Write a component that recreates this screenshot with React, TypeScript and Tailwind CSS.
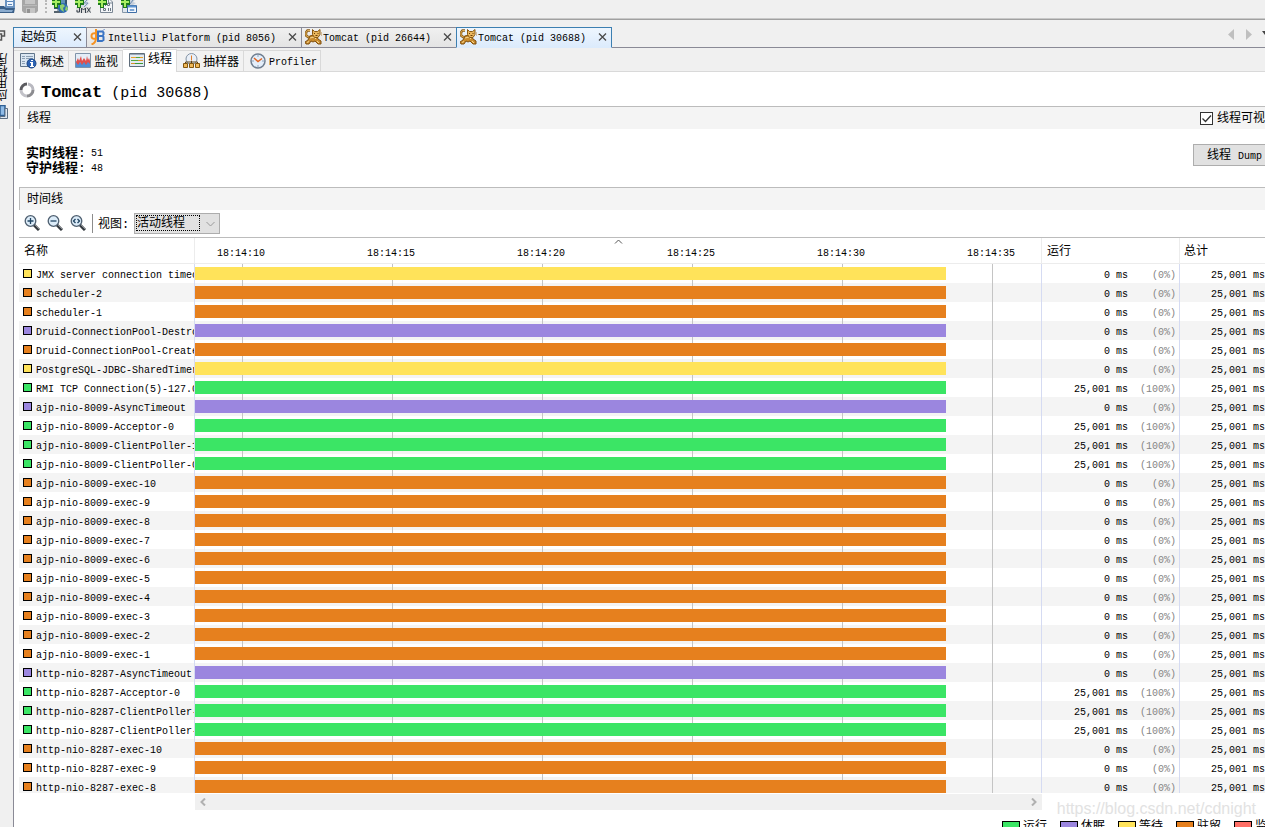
import { useState } from 'react'
import type { ReactNode } from 'react'

type State = 'running' | 'sleeping' | 'wait' | 'park' | 'monitor'

const STATE_BG: Record<State, string> = {
  running: 'bg-[#3be565]',
  sleeping: 'bg-[#9b86df]',
  wait: 'bg-[#ffe35a]',
  park: 'bg-[#e6801e]',
  monitor: 'bg-[#ff6f66]',
}

const THREADS: { name: string; state: State }[] = [
  { name: 'JMX server connection timeout', state: 'wait' },
  { name: 'scheduler-2', state: 'park' },
  { name: 'scheduler-1', state: 'park' },
  { name: 'Druid-ConnectionPool-Destroy', state: 'sleeping' },
  { name: 'Druid-ConnectionPool-Create', state: 'park' },
  { name: 'PostgreSQL-JDBC-SharedTimer', state: 'wait' },
  { name: 'RMI TCP Connection(5)-127.0.0.1', state: 'running' },
  { name: 'ajp-nio-8009-AsyncTimeout', state: 'sleeping' },
  { name: 'ajp-nio-8009-Acceptor-0', state: 'running' },
  { name: 'ajp-nio-8009-ClientPoller-1', state: 'running' },
  { name: 'ajp-nio-8009-ClientPoller-0', state: 'running' },
  { name: 'ajp-nio-8009-exec-10', state: 'park' },
  { name: 'ajp-nio-8009-exec-9', state: 'park' },
  { name: 'ajp-nio-8009-exec-8', state: 'park' },
  { name: 'ajp-nio-8009-exec-7', state: 'park' },
  { name: 'ajp-nio-8009-exec-6', state: 'park' },
  { name: 'ajp-nio-8009-exec-5', state: 'park' },
  { name: 'ajp-nio-8009-exec-4', state: 'park' },
  { name: 'ajp-nio-8009-exec-3', state: 'park' },
  { name: 'ajp-nio-8009-exec-2', state: 'park' },
  { name: 'ajp-nio-8009-exec-1', state: 'park' },
  { name: 'http-nio-8287-AsyncTimeout', state: 'sleeping' },
  { name: 'http-nio-8287-Acceptor-0', state: 'running' },
  { name: 'http-nio-8287-ClientPoller-1', state: 'running' },
  { name: 'http-nio-8287-ClientPoller-0', state: 'running' },
  { name: 'http-nio-8287-exec-10', state: 'park' },
  { name: 'http-nio-8287-exec-9', state: 'park' },
  { name: 'http-nio-8287-exec-8', state: 'park' },
]

const TICKS = ['18:14:10', '18:14:15', '18:14:20', '18:14:25', '18:14:30', '18:14:35']

const LEGEND: { label: string; state: State }[] = [
  { label: '运行', state: 'running' },
  { label: '休眠', state: 'sleeping' },
  { label: '等待', state: 'wait' },
  { label: '驻留', state: 'park' },
  { label: '监视', state: 'monitor' },
]

/* ---------- icons ---------- */

function Plus() {
  return (
    <g>
      <path d="M2 -3h4v3h3v5h-3v3h-4v-3h-3v-5h3z" fill="#1c7a1c" />
      <path d="M3 -2h2v3h3v2h-3v4h-2v-4h-3v-2h3z" fill="#a8ee62" />
    </g>
  )
}

function OpenIcon() {
  return (
    <svg width="15" height="14" viewBox="0 0 15 14">
      <path d="M5 0h10v8H5z" fill="#6b93c0" />
      <path d="M7 0h6v6H7z" fill="#eef5fd" />
      <path d="M7 1.500h6M8 4.500h4" stroke="#5a86ba" />
      <path d="M0 6h4l2 2h9l-1 5H0z" fill="#3a5f88" />
      <path d="M0 9h4l2 1h7l-1 2H0z" fill="#8aabce" />
    </svg>
  )
}

function SaveIcon() {
  return (
    <svg width="16" height="14" viewBox="0 0 16 14">
      <path d="M0 0h16v11l-2 2H2l-2-2z" fill="#a6a6a6" />
      <path d="M3 0h10v4H3z" fill="#c6c6c6" />
      <path d="M1 5.500h14" stroke="#b9b9b9" />
      <path d="M4 8h9v5H4z" fill="#c4c4c4" />
      <path d="M5 9h3v4H5z" fill="#929292" />
    </svg>
  )
}

function RemoteIcon() {
  return (
    <svg width="16" height="14" viewBox="0 0 16 14">
      <path d="M2 0h13v9H2z" fill="#33536f" />
      <path d="M4 0h9v7H4z" fill="#5f92ba" />
      <path d="M2 11h8v2H2z" fill="#56646f" />
      <path d="M5 9h4v2H5z" fill="#9aa7b2" />
      <circle cx="11" cy="8" r="5" fill="#2f6cb0" />
      <path d="M8 5l3-1 2 2-2 2 1 4-3-2-1-2zM14 6l2 2-1 3-2-1z" fill="#8fd06e" />
      <Plus />
    </svg>
  )
}

function JmxIcon() {
  return (
    <svg width="16" height="14" viewBox="0 0 16 14">
      <path d="M9 0h5l-2 2 3 1-4 4H6V4z" fill="#d3dbe5" />
      <path d="M12 0L9 3l4 0-4 4" stroke="#7c95b2" fill="none" />
      <path d="M1 7h15v6H1z" fill="#dcdcdc" />
      <path d="M4.500 7v5H2v-2M6.500 13V8l2 2 2-2v5M12 7.500l3.500 5M15.500 7.500l-3.500 5" stroke="#39434d" fill="none" />
      <Plus />
    </svg>
  )
}

function DumpIcon() {
  return (
    <svg width="16" height="14" viewBox="0 0 16 14">
      <path d="M2.500 -1h9l3 3v10.500h-12z" fill="#f3f5f8" stroke="#7b8794" />
      <path d="M10.500 0v3h4" stroke="#7b8794" fill="none" />
      <path d="M9.500 3.500h2v2h-2zM5.500 8.500h2v2h-2z" stroke="#6b7784" fill="none" />
      <path d="M7.500 3v3M10.500 8v3M12.500 8v3" stroke="#6b7784" />
      <Plus />
    </svg>
  )
}

function SnapshotIcon() {
  return (
    <svg width="17" height="14" viewBox="0 0 17 14">
      <path d="M9 0h5l-2 2 3 1-3 2H7z" fill="#c6cfdb" />
      <path d="M12 0L9 4" stroke="#6e8db0" />
      <path d="M1.500 4.500h5v8h-5z" fill="#dfe6ee" stroke="#8697a8" />
      <path d="M6.500 5.500h9v7h-9z" fill="#f5f9ff" stroke="#3f6ea6" />
      <path d="M7 6.500h8" stroke="#5f94d0" strokeWidth="2" />
      <path d="M9 9.500h4v1H9z" stroke="#7ea6d4" fill="none" />
      <Plus />
    </svg>
  )
}

function IntelliJIcon() {
  return (
    <svg width="16" height="16" viewBox="0 0 16 16" fill="none">
      <path d="M8 2.500h4.500l1 1v2l-1 1.500 1 1v3l-1.500 1H8z" stroke="#3a74c4" strokeWidth="2" />
      <path d="M8 7h5" stroke="#3a74c4" strokeWidth="2" />
      <path d="M12 2l3-2" stroke="#7b9bd0" />
      <path d="M6 0v9q0 5-4.500 6.500M6 4.500Q1.500 3.500 1.500 7t4 2.500" stroke="#f59222" strokeWidth="2" />
    </svg>
  )
}

function TomcatIcon() {
  return (
    <svg width="17" height="16" viewBox="0 0 17 16">
      {/* tail */}
      <path d="M5 1.500H2.500L1 3.500v3l2 1.500h3" fill="none" stroke="#8a5a14" strokeWidth="2.500" />
      <path d="M5 1.500H2.500L1 3.500v3l2 1.500h3" fill="none" stroke="#e2b25c" />
      {/* body */}
      <path d="M5 7l4-1 3 2 1 2 3 2v3h-3l-3-3-2 1-2-1-2 3H1l-1-2 3-2z" fill="#c98c2f" stroke="#7f4f0e" />
      <path d="M5 9l4-1 2 2M2 13.500l2-1M12 12l2 2" stroke="#f6d690" fill="none" />
      {/* head */}
      <path d="M7.500 0.500l2 2h3l2.500-2v5L13 8.500H9.500l-2-3z" fill="#eab75c" stroke="#8a5a14" />
      <path d="M9 4.500h1M12.500 4.500h1M10.500 6.500h2" stroke="#6b3f08" />
      <path d="M16 4h1M16 6h1" stroke="#b98a45" />
    </svg>
  )
}

function OverviewIcon() {
  return (
    <svg width="17" height="16" viewBox="0 0 17 16">
      <path d="M0.500 0.500h14v13h-14z" fill="#dbe7f3" stroke="#60758b" />
      <path d="M2 3.500h3M6 3.500h7M2 5.500h3M6 5.500h7M2 8.500h3M2 10.500h3" stroke="#8da0b4" />
      <circle cx="11.500" cy="10.500" r="4.500" fill="#2c62b4" stroke="#194484" />
      <path d="M11 7h2v1h-2zM10 9h3v4h1v1h-4v-1h1v-3h-1z" fill="#fff" />
    </svg>
  )
}

function MonitorIcon() {
  return (
    <svg width="16" height="16" viewBox="0 0 16 16">
      <path d="M0.500 0.500h15v14h-15z" fill="#e4edf7" stroke="#7f93a9" />
      <path d="M1 14V9l3-2 2 3 3-3 2 2 2-2 2 2v5z" fill="#4f8fd6" />
      <path d="M1 9l2-4 1 3 2-5 1 5 2-3 2 3 1-5 1 4 1-2 1 3v3l-2-2-2 3-2-3-2 3-2-3-2 3-2-3-1 2z" fill="#e2504c" />
    </svg>
  )
}

function ThreadsIcon() {
  return (
    <svg width="16" height="14" viewBox="0 0 16 14">
      <path d="M0.500 0.500h15v13h-15z" fill="#e2eaf2" stroke="#5e6c7a" />
      <path d="M1 1.500h14" stroke="#9aa8b6" />
      <path d="M2 4.500h5M11 4.500h3" stroke="#e8a02a" strokeWidth="1" />
      <path d="M7 4.500h4M2 7.500h7" stroke="#54a83d" strokeWidth="1" />
      <path d="M9 7.500h5M2 10.500h4" stroke="#d9902a" strokeWidth="1" />
      <path d="M6 10.500h8" stroke="#3f9a38" strokeWidth="1" />
    </svg>
  )
}

function SamplerIcon() {
  return (
    <svg width="17" height="16" viewBox="0 0 17 16">
      <circle cx="8.500" cy="6" r="5.500" fill="#e9eff7" stroke="#8393a5" />
      <path d="M8.500 2.500v5" stroke="#e07b25" />
      <path d="M8.500 8v3M2.500 11V9h12v2" stroke="#5f4316" fill="none" />
      <path d="M0.500 10.500h4v4h-4zM6.500 10.500h4v4h-4zM12.500 10.500h4v4h-4z" fill="#f0b858" stroke="#82560e" />
    </svg>
  )
}

function ProfilerIcon() {
  return (
    <svg width="16" height="16" viewBox="0 0 16 16">
      <circle cx="8" cy="8" r="7" fill="#e4eefa" stroke="#6f7e90" strokeWidth="1.500" />
      <path d="M8 2v2M8 12v2M2 8h2M12 8h2" stroke="#8fa3ba" />
      <path d="M4 5l4 3.500 4-3" stroke="#e0641f" strokeWidth="1.500" fill="none" />
    </svg>
  )
}

function Spinner() {
  return (
    <svg width="16" height="16" viewBox="0 0 16 16" fill="none" strokeWidth="3">
      <path d="M9 2A6 6 0 0 1 14 8" stroke="#b9b9c0" />
      <path d="M14 8A6 6 0 0 1 8 14" stroke="#8c8c90" />
      <path d="M8 14A6 6 0 0 1 2 8" stroke="#c2c2c8" />
      <path d="M2 8A6 6 0 0 1 8 2" stroke="#5c5c60" />
    </svg>
  )
}

function Magnifier({ children }: { children: ReactNode }) {
  return (
    <svg width="16" height="16" viewBox="0 0 16 16" fill="none">
      <path d="M10 10l5 5" stroke="#33383d" strokeWidth="3" />
      <path d="M11 10l4 4" stroke="#8a8f94" />
      <circle cx="6.500" cy="6" r="5.300" fill="#dcecf9" stroke="#4e5f70" strokeWidth="1.300" />
      <g stroke="#1f4462" strokeWidth="1.300">{children}</g>
    </svg>
  )
}

/* ---------- pieces ---------- */

function DocTab({ label, icon, active, cjk }: { label: string; icon?: ReactNode; active?: boolean; cjk?: boolean }) {
  const tone = active ? 'border-[#3c7fb1]' : cjk ? 'border-[#3c7fb1] border-b-[#8a8a96]' : 'border-[#8a8a96]'
  const bg = active || cjk ? 'bg-linear-to-b from-[#eef6fe] to-[#dcebfc]' : 'bg-linear-to-b from-[#f0f0f0] to-[#e4e4e4]'
  return (
    <div className={`flex h-[21px] shrink-0 items-center border-t border-l ${tone} ${bg} ${active ? 'border-r border-b border-b-[#dcebfc]' : 'border-b'} ${icon ? 'pl-[3px]' : 'pl-[7px]'}`}>
      {icon && <span className="w-4 shrink-0 pb-[2px]">{icon}</span>}
      <button className={`whitespace-nowrap leading-[19px] ${icon ? 'ml-[2px] pt-[2px]' : 'pt-px'} ${cjk ? 'text-[12px]' : 'text-[10px]'}`}>{label}</button>
      <button aria-label="关闭" className={`mr-1 ${cjk ? 'ml-4' : 'ml-3'}`}>
        <svg width="9" height="9" viewBox="0 0 9 9"><path d="M1 0.500l7 7M8 0.500l-7 7" stroke="#4a4a4a" strokeWidth="1.300" /></svg>
      </button>
    </div>
  )
}

function ViewTab({ label, icon, active, latin }: { label: string; icon: ReactNode; active?: boolean; latin?: boolean }) {
  return (
    <button className={`flex shrink-0 items-center gap-[3px] border-t border-r border-[#d9d9d9] whitespace-nowrap ${latin ? 'pr-[3px] pl-[6px] text-[10px]' : 'pr-1 pl-[6px] text-[12px]'} ${active ? 'z-10 -mb-px h-[23px] bg-white pb-[3px]' : 'h-[21px] bg-[#f2f2f2]'}`}>
      {icon}
      <span className={active ? '' : 'pt-[3px]'}>{label}</span>
    </button>
  )
}

function Section({ title, children }: { title: string; children?: ReactNode }) {
  return (
    <div className="ml-[5px] flex h-[23px] shrink-0 items-center justify-between border-t border-l border-[#bcbcbc] bg-[#f4f4f4] pl-[7px]">
      <h2 className="pt-[2px] text-[12px]">{title}</h2>
      {children}
    </div>
  )
}

function SideBar() {
  return (
    <aside className="flex w-[13px] shrink-0 flex-col items-start bg-[#f0f0f0] pt-[10px]">
      <svg width="6" height="11" viewBox="0 0 6 11" fill="none" stroke="#555">
        <path d="M0 1h4.500v5H2M0 4h1.500v6H0" strokeWidth="1.500" />
      </svg>
      <div className="mt-3 -ml-[2px] rotate-180 text-[12px] leading-3 [writing-mode:vertical-rl]">应用程序</div>
      <svg className="mt-1" width="8" height="15" viewBox="0 0 8 15">
        <path d="M0 0.500h5v10H0z" fill="#8fbbe6" stroke="#2e5f94" strokeWidth="1.500" />
        <path d="M5 3.500h2.500v10H0v-2h5z" fill="#dfe8f2" stroke="#5d6f82" />
      </svg>
    </aside>
  )
}

function ThreadTable() {
  return (
    <table className="w-full table-fixed border-separate border-spacing-0 text-left text-[10px]">
      <colgroup>
        <col className="w-[176px]" />
        <col />
        <col className="w-[138px]" />
        <col className="w-[85px]" />
      </colgroup>
      <thead>
        <tr className="h-[26px] text-[12px] [&>th]:border-b [&>th]:border-[#ececec] [&>th]:p-0 [&>th]:pt-[3px] [&>th]:font-normal">
          <th className="border-r"><span className="pl-[5px]">名称</span></th>
          <th className="relative border-r">
            <svg className="absolute top-px left-1/2 -ml-1" width="9" height="5" viewBox="0 0 9 5" fill="none" stroke="#555">
              <path d="M1 4.500l3.500-3.500 3.500 3.500" />
            </svg>
            <div className="flex overflow-hidden pt-[2px] pl-[22px] text-[10px]">
              {TICKS.map((t, i) => (
                <span key={t} className={i < TICKS.length - 1 ? 'w-[150px] shrink-0' : ''}>{t}</span>
              ))}
            </div>
          </th>
          <th className="border-r"><span className="pl-[5px]">运行</span></th>
          <th><span className="pl-1">总计</span></th>
        </tr>
      </thead>
      <tbody>
        {THREADS.map(t => {
          const running = t.state === 'running'
          return (
            <tr key={t.name} className="h-[19px] even:bg-[#f4f4f4] [&>td]:border-[#d5dbf2] [&>td]:p-0">
              <td className="border-r">
                <div className="flex h-[19px] gap-1 overflow-hidden pl-1">
                  <span className={`mt-[5px] size-[9px] shrink-0 border border-black ${STATE_BG[t.state]}`} />
                  <span className="pt-1 leading-[15px] whitespace-nowrap">{t.name}</span>
                </div>
              </td>
              {/* one grid line every 5 seconds, 30px per second */}
              <td className="border-r bg-[linear-gradient(to_right,#c4c4c4_1px,transparent_1px)] bg-size-[150px_100%] bg-position-[47px_0]">
                <div className={`h-[13px] w-[751px] ${STATE_BG[t.state]}`} />
              </td>
              <td className="border-r">
                <div className="flex h-[19px] justify-end pt-1 pr-[3px] leading-[15px]">
                  <span>{running ? '25,001 ms' : '0 ms'}</span>
                  <span className="w-12 text-right text-[#858585]">{running ? '(100%)' : '(0%)'}</span>
                </div>
              </td>
              <td><div className="h-[19px] pt-1 pl-[31px] leading-[15px] whitespace-nowrap">25,001 ms</div></td>
            </tr>
          )
        })}
      </tbody>
    </table>
  )
}

export default function App() {
  const [visible, setVisible] = useState(true)
  const [view, setView] = useState('live')

  return (
    <div className="relative flex h-screen flex-col overflow-hidden bg-[#f0f0f0] font-['Liberation_Mono','Noto_Sans_CJK_SC',monospace] text-black">
      {/* Main toolbar */}
      <div className="flex h-[20px] shrink-0 items-start border-b border-[#a0a0a0] shadow-[inset_0_-1px_#c8c8c8]">
        <button aria-label="打开"><OpenIcon /></button>
        <button aria-label="保存" className="ml-[7px]" disabled><SaveIcon /></button>
        <span className="mr-[5px] ml-[7px] h-[13px] border-l-2 border-dotted border-[#b8b8b8]" />
        <div className="flex gap-[7px]">
          <button aria-label="添加远程主机"><RemoteIcon /></button>
          <button aria-label="添加 JMX 连接"><JmxIcon /></button>
          <button aria-label="添加核心 Dump"><DumpIcon /></button>
          <button aria-label="添加快照"><SnapshotIcon /></button>
        </div>
      </div>

      <div className="flex min-h-0 flex-1">
        <SideBar />

        <main className="mt-[7px] flex min-w-0 flex-1 flex-col border-l border-[#8a8a96]">
          {/* Document tabs */}
          <div className="-ml-px flex h-[21px] shrink-0 bg-[linear-gradient(to_top,#8a8a96_1px,transparent_1px)]">
            <DocTab label="起始页" cjk />
            <DocTab label="IntelliJ Platform (pid 8056)" icon={<IntelliJIcon />} />
            <DocTab label="Tomcat (pid 26644)" icon={<TomcatIcon />} />
            <DocTab label="Tomcat (pid 30688)" icon={<TomcatIcon />} active />
            <div className="ml-auto flex items-start gap-3 pt-[2px]">
              <svg width="6" height="11" viewBox="0 0 6 11"><path d="M6 0v11L0 5.500z" fill="#bfbfbf" /></svg>
              <svg width="6" height="11" viewBox="0 0 6 11"><path d="M0 0v11l6-5.500z" fill="#bfbfbf" /></svg>
              <svg className="-ml-[2px] mt-[2px]" width="3" height="4" viewBox="0 0 3 4"><path d="M0 0h3v4z" fill="#444" /></svg>
            </div>
          </div>

          {/* View tabs */}
          <div className="flex h-6 shrink-0 items-end border-b border-[#d9d9d9]">
            <ViewTab label="概述" icon={<OverviewIcon />} />
            <ViewTab label="监视" icon={<MonitorIcon />} />
            <ViewTab label="线程" icon={<ThreadsIcon />} active />
            <ViewTab label="抽样器" icon={<SamplerIcon />} />
            <ViewTab label="Profiler" icon={<ProfilerIcon />} latin />
          </div>

          <div className="flex min-h-0 flex-1 flex-col bg-white">
            <div className="flex h-[34px] shrink-0 items-center gap-[6px] pl-[5px]">
              <span className="pt-[2px]"><Spinner /></span>
              <h1 className="pt-2 text-[15px] leading-5 whitespace-pre"><b className="text-[17px]">Tomcat</b> (pid 30688)</h1>
            </div>

            <Section title="线程">
              <label className="flex items-center gap-1 text-[12px] whitespace-nowrap">
                <span className="relative flex">
                  <input type="checkbox" checked={visible} onChange={e => setVisible(e.target.checked)} className="size-[13px] appearance-none border border-[#333] bg-white" />
                  {visible && (
                    <svg className="pointer-events-none absolute inset-0" width="13" height="13" viewBox="0 0 13 13" fill="none" stroke="#333">
                      <path d="M2.500 6.500l3 3 5.500-6" strokeWidth="1.300" />
                    </svg>
                  )}
                </span>
                <span className="pt-[2px]">线程可视</span>
              </label>
            </Section>

            <div className="flex h-[58px] shrink-0 items-start justify-between">
              <dl className="grid grid-cols-[65px_auto] pt-[17px] pl-3 text-[10px] leading-[15px]">
                <dt className="text-[13px] font-bold">实时线程<span className="font-normal">:</span></dt>
                <dd>51</dd>
                <dt className="text-[13px] font-bold">守护线程<span className="font-normal">:</span></dt>
                <dd>48</dd>
              </dl>
              <button className="mt-[15px] flex h-[22px] w-[72px] items-center border border-r-0 border-[#adadad] bg-[#e1e1e1] pt-[2px] pl-[13px] text-[12px] whitespace-nowrap">
                线程<span className="ml-[7px] text-[10px]">Dump</span>
              </button>
            </div>

            <Section title="时间线" />

            {/* Timeline toolbar */}
            <div className="ml-[5px] flex h-[28px] shrink-0 items-center border-b border-[#bcbcbc] pl-[5px] text-[12px]">
              <div className="flex gap-[7px] pb-[2px]">
                <button aria-label="放大"><Magnifier><path d="M3.500 6h6M6.500 3v6" /></Magnifier></button>
                <button aria-label="缩小"><Magnifier><path d="M3.500 6h6" /></Magnifier></button>
                <button aria-label="适应窗口"><Magnifier><path d="M5.500 4L3.500 6l2 2M7.500 4l2 2-2 2" /></Magnifier></button>
              </div>
              <span className="ml-[6px] h-[19px] border-l border-[#8c8c8c]" />
              <label htmlFor="view" className="ml-[5px] w-[36px] pt-[2px] whitespace-nowrap">视图:</label>
              <div className="relative">
                <select id="view" value={view} onChange={e => setView(e.target.value)} className="block h-[21px] w-[86px] appearance-none border border-[#adadad] bg-[#e1e1e1] pt-[2px] pl-[2px] text-[12px] leading-[17px]">
                  <option value="live">活动线程</option>
                  <option value="all">所有线程</option>
                </select>
                <span className="pointer-events-none absolute top-[2px] left-[2px] h-4 w-16 border border-dotted border-black" />
                <svg className="pointer-events-none absolute top-2 right-[5px]" width="9" height="6" viewBox="0 0 9 6" fill="none" stroke="#9a9a9a">
                  <path d="M0.500 1l4 4 4-4" />
                </svg>
              </div>
            </div>

            <div className="ml-[5px] min-h-0 flex-1 overflow-hidden">
              <ThreadTable />
            </div>

            {/* Horizontal scrollbar under the timeline column */}
            <div className="mt-px mr-[223px] ml-[181px] flex h-4 shrink-0 items-center justify-between bg-[#f0f0f0] px-[5px]">
              <button aria-label="向左滚动">
                <svg width="6" height="8" viewBox="0 0 6 8" fill="none" stroke="#b0b0b0" strokeWidth="2"><path d="M5 0.500L1.500 4 5 7.500" /></svg>
              </button>
              <button aria-label="向右滚动">
                <svg width="6" height="8" viewBox="0 0 6 8" fill="none" stroke="#b0b0b0" strokeWidth="2"><path d="M1 0.500L4.500 4 1 7.500" /></svg>
              </button>
            </div>

            <div className="flex h-[17px] shrink-0 justify-end overflow-hidden pt-[11px]">
              <ul className="flex w-[263px] text-[12px] leading-3">
                {LEGEND.map(l => (
                  <li key={l.label} className="flex w-[58px] shrink-0 items-start gap-[3px] whitespace-nowrap">
                    <span className={`h-[11px] w-[18px] shrink-0 border border-black ${STATE_BG[l.state]}`} />
                    {l.label}
                  </li>
                ))}
              </ul>
            </div>
          </div>
        </main>
      </div>

      <div className="pointer-events-none absolute right-[9px] bottom-[8px] font-['Liberation_Sans',sans-serif] text-[16px] leading-5 text-[#e2e2e2]">
        https://blog.csdn.net/cdnight
      </div>
    </div>
  )
}
